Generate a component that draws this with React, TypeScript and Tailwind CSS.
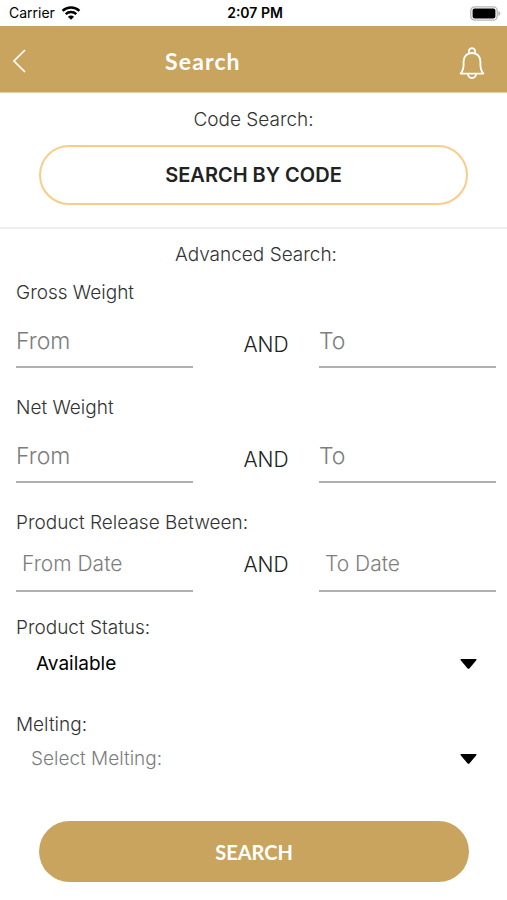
import React from "react";

function WifiIcon() {
  return (
    <svg width="20" height="14" viewBox="0 0 20 14" fill="none" aria-hidden="true">
      <path d="M1.6 4.9C6.2 0.5 13.8 0.5 18.4 4.9" stroke="#000" strokeWidth="2.5" />
      <path d="M4.7 8.1C7.6 5.3 12.4 5.3 15.3 8.1" stroke="#000" strokeWidth="2.4" />
      <path d="M10 13.8L6.9 10.7C8.6 9.1 11.4 9.1 13.1 10.7Z" fill="#000" />
    </svg>
  );
}

function BatteryIcon() {
  return (
    <svg width="31" height="15" viewBox="0 0 31 15" aria-hidden="true">
      <rect x="0.8" y="0.8" width="26.4" height="13.4" rx="4" fill="#fff" stroke="#b5b5b5" strokeWidth="1.3" />
      <rect x="2.6" y="2.6" width="22.8" height="9.8" rx="2" fill="#000" />
      <path d="M28.4 5V10C29.6 9.6 30.3 8.6 30.3 7.5S29.6 5.4 28.4 5Z" fill="#b5b5b5" />
    </svg>
  );
}

function BackIcon() {
  return (
    <svg width="14" height="24" viewBox="0 0 14 24" fill="none" aria-hidden="true">
      <path d="M13 1L2 12L13 23" stroke="#fff" strokeWidth="1.7" />
    </svg>
  );
}

function BellIcon() {
  return (
    <svg width="26" height="32" viewBox="0 0 26 32" fill="none" stroke="#fff" strokeWidth="1.8" aria-hidden="true">
      <path d="M10.3 6.2C9 3.6 10.7 1.2 13 1.2S17 3.6 15.7 6.2" />
      <path d="M1.6 26.6C3.8 24.3 4.6 21.5 4.6 17.5V14C4.6 9.3 8.2 6 13 6S21.4 9.3 21.4 14V17.5C21.4 21.5 22.2 24.3 24.4 26.6Z" strokeLinejoin="round" />
      <path d="M9 27C9.2 29.4 10.8 31 13 31S16.8 29.4 17 27" />
    </svg>
  );
}

const label = "block text-[19px] leading-6 font-light text-[#333333]";

type RangeProps = { title: string; name: string };

function WeightRange({ title, name }: RangeProps) {
  const field =
    "h-[47px] w-full min-w-0 border-b-2 border-[#b0b0b0] bg-transparent pb-[6px] text-[23px] font-light text-black outline-none placeholder:text-[#7d7d7d]";
  return (
    <fieldset>
      <legend className={label}>{title}</legend>
      <div className="mt-4 grid grid-cols-[1fr_126px_1fr] items-center">
        <input className={field} name={name + "From"} aria-label={title + " from"} placeholder="From" />
        <span className="pl-5 text-center text-[21px] leading-6 font-light text-[#222222]">AND</span>
        <input className={field} name={name + "To"} aria-label={title + " to"} placeholder="To" />
      </div>
    </fieldset>
  );
}

function DateRange() {
  const field =
    "h-[55px] w-full min-w-0 border-b-2 border-[#b0b0b0] bg-transparent px-[6px] text-[21px] font-light text-black outline-none placeholder:text-[#7d7d7d]";
  return (
    <fieldset>
      <legend className={label}>Product Release Between:</legend>
      <div className="mt-0.5 grid grid-cols-[1fr_126px_1fr] items-center">
        <input className={field} name="releaseFrom" aria-label="From date" placeholder="From Date" />
        <span className="pl-5 text-center text-[21px] leading-6 font-light text-[#222222]">AND</span>
        <input className={field} name="releaseTo" aria-label="To date" placeholder="To Date" />
      </div>
    </fieldset>
  );
}

function Caret() {
  return (
    <svg className="pointer-events-none absolute top-1/2 right-[19px] -translate-y-1/2" width="17" height="11" viewBox="0 0 17 11" aria-hidden="true">
      <path d="M1.2 0.5H15.8C16.6 0.5 16.8 1.3 16.3 1.8L9.4 9.9C8.9 10.5 8.1 10.5 7.6 9.9L0.7 1.8C0.2 1.3 0.4 0.5 1.2 0.5Z" fill="#000" />
    </svg>
  );
}

export default function App() {
  return (
    <div className="min-h-screen bg-white font-[Inter,'Liberation_Sans',sans-serif]">
      <div className="grid h-[26px] grid-cols-3 items-center pr-[6px] pl-[9px] text-[14px] leading-5 text-black">
        <div className="flex items-center gap-[6px]">
          <span>Carrier</span>
          <WifiIcon />
        </div>
        <span className="text-center font-semibold">2:07 PM</span>
        <div className="flex justify-end">
          <BatteryIcon />
        </div>
      </div>

      <header className="flex h-[67px] items-center border-b border-[#e2cfab] bg-[#c9a45f] pt-1 pr-[22px] pl-3 text-white">
        <button type="button" aria-label="Back">
          <BackIcon />
        </button>
        <h1 className="flex-1 pl-[139px] font-[Lato,sans-serif] text-[23px] leading-7 font-bold tracking-wider">Search</h1>
        <button type="button" aria-label="Notifications" className="pt-1">
          <BellIcon />
        </button>
      </header>

      <main>
        <section className="border-b-2 border-[#eeeeee] px-[39px] pt-[15px] pb-[22px]">
          <h2 className={label + " text-center"}>Code Search:</h2>
          <button type="button" className="mt-[13px] h-[60px] w-full rounded-full border-2 border-[#f8cd88] text-[20px] font-semibold text-[#222222]">
            SEARCH BY CODE
          </button>
        </section>

        <form className="pt-[14px] pr-[11px] pb-[17px] pl-4" onSubmit={(e) => e.preventDefault()}>
          <h2 className={label + " text-center"}>Advanced Search:</h2>
          <div className="mt-[14px] flex flex-col gap-7">
            <WeightRange title="Gross Weight" name="gross" />
            <WeightRange title="Net Weight" name="net" />
            <DateRange />
          </div>

          <div className="mt-6">
            <label htmlFor="status" className={label}>Product Status:</label>
            <div className="relative">
              <select id="status" defaultValue="available" className="h-12 w-full appearance-none bg-transparent pr-12 pl-5 text-[19px] text-black outline-none">
                <option value="available">Available</option>
              </select>
              <Caret />
            </div>
          </div>

          <div className="mt-[25px]">
            <label htmlFor="melting" className={label}>Melting:</label>
            <div className="relative">
              <select id="melting" defaultValue="" className="h-11 w-full appearance-none bg-transparent pr-12 pl-[15px] text-[19px] font-light text-[#7d7d7d] outline-none">
                <option value="">Select Melting:</option>
              </select>
              <Caret />
            </div>
          </div>

          <div className="mt-10 pr-[27px] pl-[23px]">
            <button type="submit" className="h-[61px] w-full rounded-full bg-[#c9a45f] font-[Lato,sans-serif] text-[20px] font-bold text-white">
              SEARCH
            </button>
          </div>
        </form>
      </main>
    </div>
  );
}
